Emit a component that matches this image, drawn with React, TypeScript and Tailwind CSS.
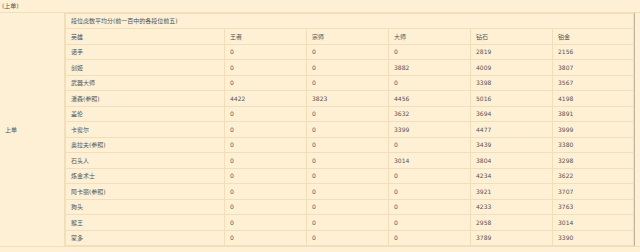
import React from 'react';

const cols = ['王者', '宗师', '大师', '钻石', '铂金'];

const rows: [string, number[]][] = [
  ['诺手', [0, 0, 0, 2819, 2156]],
  ['剑姬', [0, 0, 3882, 4009, 3807]],
  ['武器大师', [0, 0, 0, 3398, 3567]],
  ['潘森(参照)', [4422, 3823, 4456, 5016, 4198]],
  ['盖伦', [0, 0, 3632, 3694, 3891]],
  ['卡蜜尔', [0, 0, 3399, 4477, 3999]],
  ['奥拉夫(参照)', [0, 0, 0, 3439, 3380]],
  ['石头人', [0, 0, 3014, 3804, 3298]],
  ['炼金术士', [0, 0, 0, 4234, 3622]],
  ['阿卡丽(参照)', [0, 0, 0, 3921, 3707]],
  ['狗头', [0, 0, 0, 4233, 3763]],
  ['猴王', [0, 0, 0, 2958, 3014]],
  ['蒙多', [0, 0, 0, 3789, 3390]],
];

const cell = 'border border-[#f2dfb8] pl-[5px] text-left font-normal align-middle';

export default function App() {
  return (
    <div
      className="w-[640px] h-[252px] overflow-hidden bg-[#fdf0d4] text-[6px] leading-none text-[#555]"
      style={{ fontFamily: '"DejaVu Sans", "Noto Sans CJK SC", sans-serif' }}
    >
      <div className="h-[13px] flex items-center pl-[2px] border-b border-[#f2dfb8]">(上单)</div>

      <div className="flex w-[635px] border-r border-[#bdb3a0]">
        {/* left label */}
        <div className="w-[67px] h-[233px] flex items-center pl-[5px] border-r border-[#f2dfb8]">上单</div>

        {/* inner table */}
        <table className="border-collapse table-fixed w-[568px]">
          <colgroup>
            <col className="w-[159px]" />
            <col className="w-[82px]" />
            <col className="w-[82px]" />
            <col className="w-[82px]" />
            <col className="w-[82px]" />
            <col className="w-[81px]" />
          </colgroup>
          <tbody>
            <tr className="h-[15px]">
              <td colSpan={6} className={cell}>段位虎数平均分(前一百中的各段位前五)</td>
            </tr>
            <tr className="h-[16px]">
              <th className={cell}>英雄</th>
              {cols.map((c) => (
                <th key={c} className={cell}>{c}</th>
              ))}
            </tr>
            {rows.map(([name, vals], i) => (
              <tr key={name} className={i % 2 === 0 ? 'h-[15px]' : 'h-[16px]'}>
                <td className={cell}>{name}</td>
                {vals.map((v, j) => (
                  <td key={j} className={cell}>{v}</td>
                ))}
              </tr>
            ))}
          </tbody>
        </table>
      </div>
      <div className="h-[6px] border-t border-[#f2dfb8]" />
    </div>
  );
}
